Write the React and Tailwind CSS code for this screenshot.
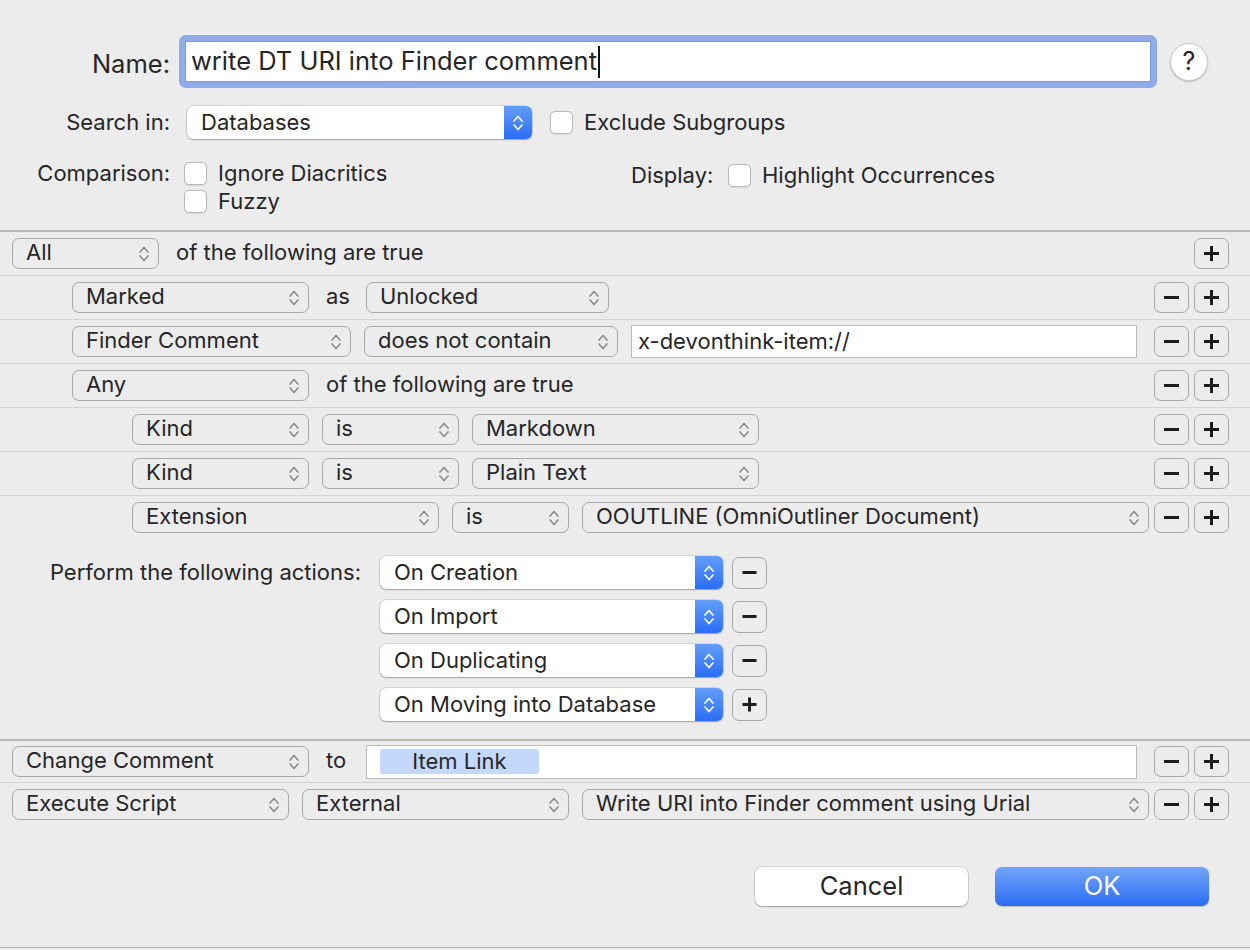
import React from "react";

function Chevrons({ white = false }) {
  return (
    <svg width="12" height="20" viewBox="0 0 12 20" fill="none" stroke={white ? "#ffffff" : "#8e8e8e"} strokeWidth="1.7" strokeLinecap="round" strokeLinejoin="round">
      <path d="M2 8 L6 3.5 L10 8" />
      <path d="M2 12 L6 16.5 L10 12" />
    </svg>
  );
}

function Pop({ w, children }) {
  return (
    <div className={`${w} h-[31px] shrink-0 flex items-center justify-between rounded-[7px] border-[1.5px] border-[#a8a8a8] pl-[13px] pr-[8px]`}>
      <span className="whitespace-nowrap overflow-hidden pb-[2px]">{children}</span>
      <Chevrons />
    </div>
  );
}

function BluePop({ w, children }) {
  return (
    <div className={`${w} h-[33px] shrink-0 flex items-stretch rounded-[6px] bg-white shadow-[0_0_0_0.5px_rgba(0,0,0,0.2),0_1px_1.5px_rgba(0,0,0,0.25)] overflow-hidden`}>
      <span className="flex-1 flex items-center pl-[14px] pb-[1px] whitespace-nowrap">{children}</span>
      <span className="w-[28px] flex items-center justify-center bg-linear-to-b from-[#639df8] to-[#2b6cf6]">
        <Chevrons white />
      </span>
    </div>
  );
}

function Sq({ plus = false }) {
  return (
    <div className="w-[35px] h-[31px] shrink-0 flex items-center justify-center rounded-[7px] border-[1.5px] border-[#a8a8a8]">
      <svg width="17" height="17" viewBox="0 0 17 17">
        <path d="M1 8.5h15" stroke="#1c1c1c" strokeWidth="3" />
        {plus && <path d="M8.5 1v15" stroke="#1c1c1c" strokeWidth="3" />}
      </svg>
    </div>
  );
}

function Row({ pl, children, last = false, minus = true }) {
  return (
    <div className={`${last ? "h-[43px]" : "h-[44px] border-b border-[#d3d3d3]"} flex items-center ${pl} pr-[21px]`}>
      {children}
      <div className="ml-auto flex gap-[5px]">
        {minus && <Sq />}
        <Sq plus />
      </div>
    </div>
  );
}

function Box() {
  return <div className="w-[23px] h-[23px] shrink-0 rounded-[5px] bg-white border border-[#b9b9b9] shadow-[0_0.5px_1px_rgba(0,0,0,0.08)]" />;
}

function Check({ label }) {
  return (
    <div className="flex items-center h-[23px]">
      <Box />
      <span className="ml-[11px] whitespace-nowrap">{label}</span>
    </div>
  );
}

export default function App() {
  return (
    <div className="w-[1250px] h-[950px] bg-[#ececec] flex flex-col text-[#262626] text-[22px] font-['Inter','Liberation_Sans',sans-serif] overflow-hidden">
      {/* Top section */}
      <div className="h-[230px] pt-[35px] shrink-0">
        <div className="flex items-center h-[53px]">
          <div className="w-[170px] text-right text-[25.5px] pt-[5px]">Name:</div>
          <div className="ml-[9px] w-[978px] h-[53px] rounded-[7px] bg-[#8eabea] p-[6px]">
            <div className="h-full bg-white border border-[#7a99df] flex items-center pl-[5px] text-[25.5px] whitespace-nowrap">
              write DT URI into Finder comment
              <span className="inline-block w-[2px] h-[32px] bg-[#111] ml-[1px]" />
            </div>
          </div>
          <div className="ml-[13px] w-[38px] h-[38px] rounded-full bg-white border border-[#c9c9c9] shadow-[0_1px_1.5px_rgba(0,0,0,0.2)] flex items-center justify-center text-[25px]">
            ?
          </div>
        </div>

        <div className="flex items-center h-[33px] mt-[18px]">
          <div className="w-[170px] text-right">Search in:</div>
          <div className="ml-[17px]">
            <BluePop w="w-[345px]">Databases</BluePop>
          </div>
          <div className="ml-[18px]">
            <Check label="Exclude Subgroups" />
          </div>
        </div>

        <div className="flex mt-[23px]">
          <div className="w-[170px] text-right h-[23px] leading-[23px]">Comparison:</div>
          <div className="ml-[14px] w-[447px] flex flex-col gap-[5px]">
            <Check label="Ignore Diacritics" />
            <Check label="Fuzzy" />
          </div>
          <div className="flex items-center h-[23px] mt-[2px]">
            <span className="w-[97px]">Display:</span>
            <Check label="Highlight Occurrences" />
          </div>
        </div>
      </div>

      {/* Criteria */}
      <div className="border-t-2 border-[#b8b8b8] shrink-0">
        <Row pl="pl-[12px]" minus={false}>
          <Pop w="w-[147px]">All</Pop>
          <span className="ml-[17px] pb-[2px]">of the following are true</span>
        </Row>
        <Row pl="pl-[72px]">
          <Pop w="w-[237px]">Marked</Pop>
          <span className="w-[57px] pl-[17px] pb-[2px]">as</span>
          <Pop w="w-[243px]">Unlocked</Pop>
        </Row>
        <Row pl="pl-[72px]">
          <Pop w="w-[279px]">Finder Comment</Pop>
          <div className="ml-[13px]">
            <Pop w="w-[254px]">does not contain</Pop>
          </div>
          <div className="ml-[13px] w-[506px] h-[33px] bg-white border border-[#bcbcbc] flex items-center pl-[6px]">
            x-devonthink-item://
          </div>
        </Row>
        <Row pl="pl-[72px]">
          <Pop w="w-[237px]">Any</Pop>
          <span className="ml-[17px] pb-[2px]">of the following are true</span>
        </Row>
        <Row pl="pl-[132px]">
          <Pop w="w-[177px]">Kind</Pop>
          <div className="ml-[13px]">
            <Pop w="w-[137px]">is</Pop>
          </div>
          <div className="ml-[13px]">
            <Pop w="w-[287px]">Markdown</Pop>
          </div>
        </Row>
        <Row pl="pl-[132px]">
          <Pop w="w-[177px]">Kind</Pop>
          <div className="ml-[13px]">
            <Pop w="w-[137px]">is</Pop>
          </div>
          <div className="ml-[13px]">
            <Pop w="w-[287px]">Plain Text</Pop>
          </div>
        </Row>
        <Row pl="pl-[132px]" last>
          <Pop w="w-[307px]">Extension</Pop>
          <div className="ml-[13px]">
            <Pop w="w-[117px]">is</Pop>
          </div>
          <div className="ml-[13px]">
            <Pop w="w-[567px]">OOUTLINE (OmniOutliner Document)</Pop>
          </div>
        </Row>
      </div>

      {/* Actions triggers */}
      <div className="flex pt-[17px] pb-[18px] shrink-0">
        <div className="w-[361px] text-right h-[33px] leading-[33px] whitespace-nowrap">Perform the following actions:</div>
        <div className="ml-[19px] flex flex-col gap-[11px]">
          {[
            ["On Creation", false],
            ["On Import", false],
            ["On Duplicating", false],
            ["On Moving into Database", true],
          ].map(([t, plus]) => (
            <div key={t} className="flex items-center gap-[9px]">
              <BluePop w="w-[343px]">{t}</BluePop>
              <div className="w-[35px] h-[32px] shrink-0 flex items-center justify-center rounded-[7px] border-[1.5px] border-[#a8a8a8]">
                <svg width="17" height="17" viewBox="0 0 17 17">
                  <path d="M1.5 8.5h14" stroke="#1c1c1c" strokeWidth="3" />
                  {plus && <path d="M8.5 1.5v14" stroke="#1c1c1c" strokeWidth="3" />}
                </svg>
              </div>
            </div>
          ))}
        </div>
      </div>

      {/* Actions */}
      <div className="border-t-2 border-[#b8b8b8] shrink-0">
        <div className="h-[42px] flex items-center pl-[12px] pr-[21px] border-b border-[#d3d3d3]">
          <Pop w="w-[297px]">Change Comment</Pop>
          <span className="w-[57px] pl-[17px] pb-[2px]">to</span>
          <div className="w-[771px] h-[34px] bg-white border border-[#bcbcbc] flex items-center pl-[13px]">
            <span className="w-[159px] h-[25px] rounded-[3px] bg-[#c4d8fb] flex items-center justify-center">Item Link</span>
          </div>
          <div className="ml-auto flex gap-[5px]">
            <Sq />
            <Sq plus />
          </div>
        </div>
        <div className="h-[43px] flex items-center pl-[12px] pr-[21px]">
          <Pop w="w-[277px]">Execute Script</Pop>
          <div className="ml-[13px]">
            <Pop w="w-[267px]">External</Pop>
          </div>
          <div className="ml-[13px]">
            <Pop w="w-[567px]">Write URI into Finder comment using Urial</Pop>
          </div>
          <div className="ml-auto flex gap-[5px]">
            <Sq />
            <Sq plus />
          </div>
        </div>
      </div>

      {/* Buttons */}
      <div className="flex justify-end pr-[41px] gap-[27px] mt-[41px] shrink-0">
        <div className="w-[213px] h-[39px] rounded-[7px] bg-white shadow-[0_0_0_0.5px_rgba(0,0,0,0.2),0_1px_1.5px_rgba(0,0,0,0.25)] flex items-center justify-center text-[25.5px]">
          Cancel
        </div>
        <div className="w-[214px] h-[39px] rounded-[7px] bg-linear-to-b from-[#72a4f7] to-[#2c6bf5] shadow-[0_0.5px_1px_rgba(0,0,0,0.2)] flex items-center justify-center text-[25.5px] text-white">
          OK
        </div>
      </div>

      <div className="mt-auto mb-[2px] h-px bg-[#b2b2b2] shrink-0" />
    </div>
  );
}
